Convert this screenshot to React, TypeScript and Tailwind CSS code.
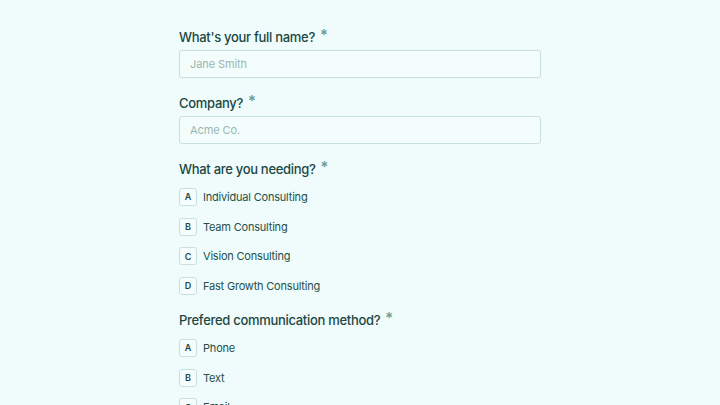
import React from "react";

type Question = {
  label: string;
  options: string[];
};

const textFields = [
  { label: "What's your full name?", placeholder: "Jane Smith" },
  { label: "Company?", placeholder: "Acme Co." },
];

const choiceQuestions: Question[] = [
  {
    label: "What are you needing?",
    options: [
      "Individual Consulting",
      "Team Consulting",
      "Vision Consulting",
      "Fast Growth Consulting",
    ],
  },
  {
    label: "Prefered communication method?",
    options: ["Phone", "Text", "Email"],
  },
];

const letters = ["A", "B", "C", "D", "E"];

function Label({ text }: { text: string }) {
  return (
    <div className="flex items-start text-[13px] leading-[16px] font-medium tracking-[-0.3px] text-[#1c4743]">
      <span>{text}</span>
      <span className="ml-[5px] text-[15px] leading-[12px] text-[#6b9692]">*</span>
    </div>
  );
}

export default function App() {
  return (
    <div
      className="h-[405px] w-[720px] overflow-hidden bg-[#effcfb]"
      style={{ fontFamily: "Inter, 'Liberation Sans', sans-serif" }}
    >
      <div className="mx-auto flex w-[362px] flex-col gap-[17px] pt-[29px]">
        {textFields.map((f) => (
          <div key={f.label} className="flex flex-col gap-[5px]">
            <Label text={f.label} />
            <input
              readOnly
              placeholder={f.placeholder}
              className="h-[28px] w-full rounded-[3px] border border-[#c7dfdd] bg-[#f3fdfc] px-[10px] text-[11px] tracking-[-0.1px] text-[#1c4743] outline-none placeholder:text-[#9bb5b2]"
            />
          </div>
        ))}
        {choiceQuestions.map((q) => (
          <div key={q.label} className="flex flex-col gap-[11px]">
            <Label text={q.label} />
            <div className="flex flex-col gap-[11.7px]">
              {q.options.map((o, i) => (
                <div key={o} className="flex items-center gap-[6px]">
                  <div className="flex h-[18px] w-[18px] shrink-0 items-center justify-center rounded-[3px] border border-[#c7dfdd] bg-[#f6fefd] text-[9px] font-semibold text-[#1c4743]">
                    {letters[i]}
                  </div>
                  <span className="text-[11px] leading-[18px] tracking-[-0.2px] text-[#24504c]">{o}</span>
                </div>
              ))}
            </div>
          </div>
        ))}
      </div>
    </div>
  );
}
